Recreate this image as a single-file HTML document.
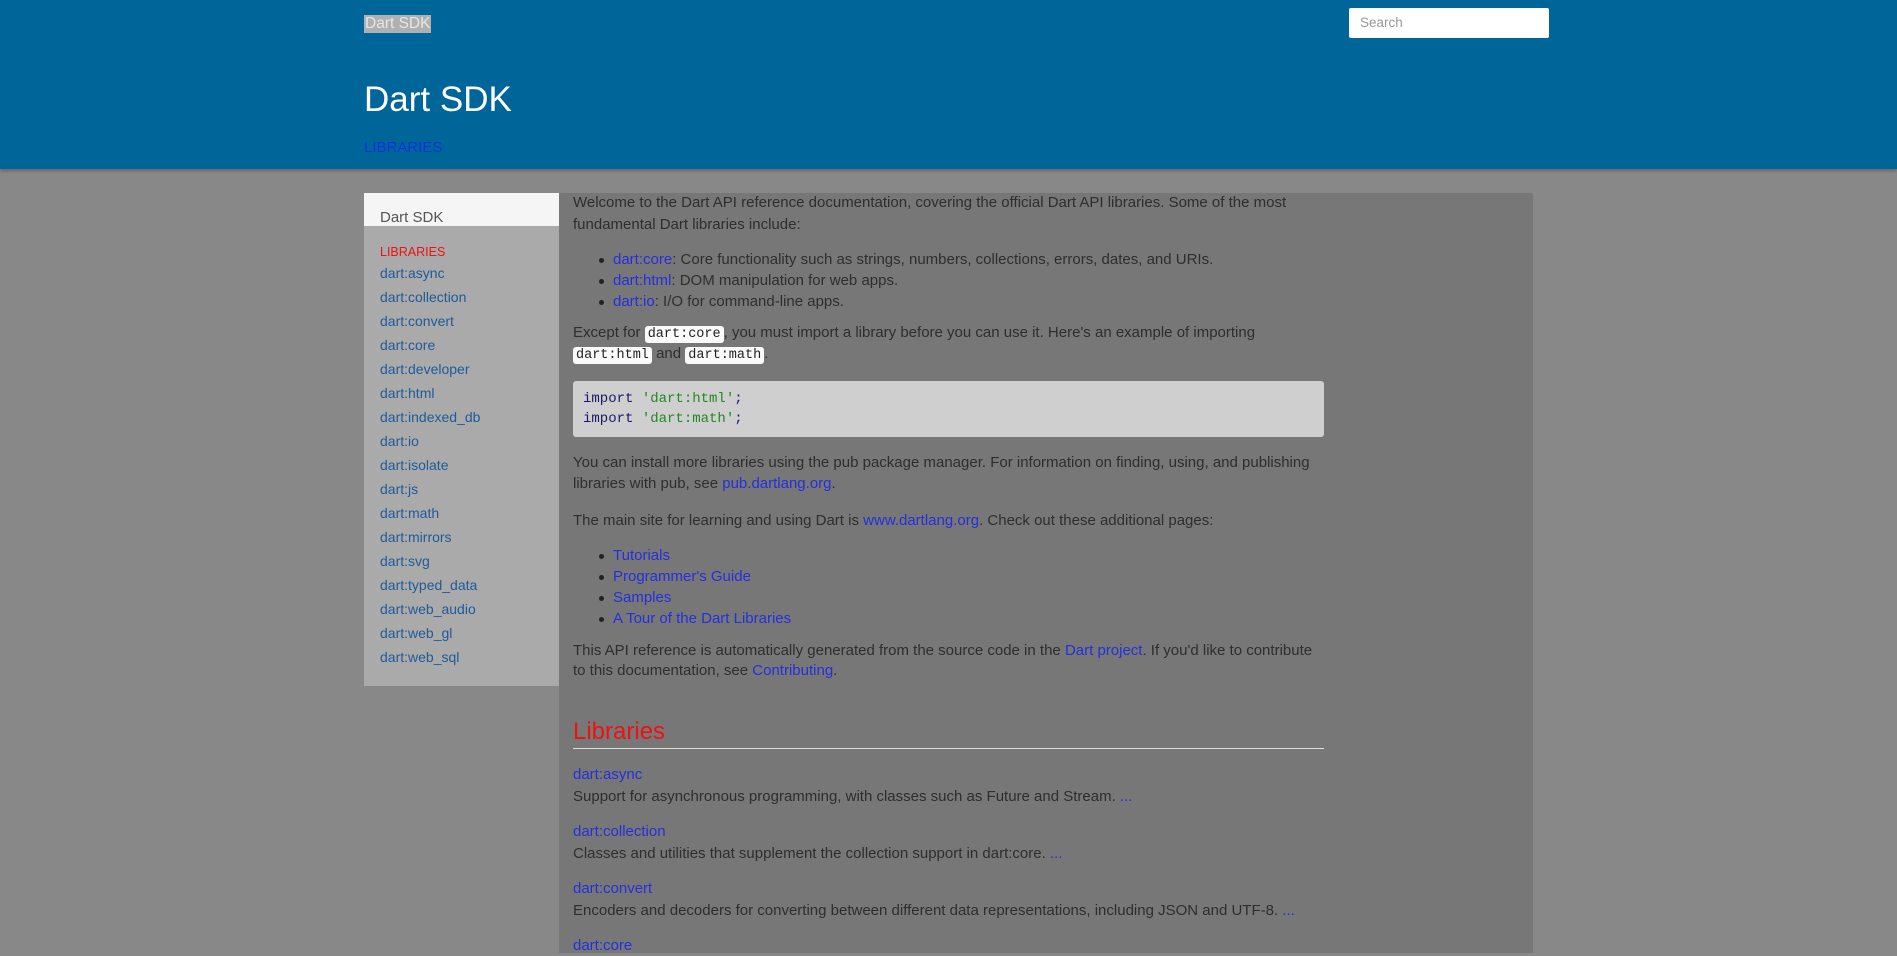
<!DOCTYPE html>
<html><head><meta charset="utf-8">
<style>
*{box-sizing:border-box;margin:0;padding:0}
body{width:1897px;height:953px;overflow:hidden;background:#888;font-family:"Liberation Sans",sans-serif;color:#2e2e2e;position:relative}
a{color:#2230dd;text-decoration:none}
.hdr{position:absolute;left:0;top:0;width:1897px;height:169px;background:#006699;box-shadow:0 2px 3px rgba(0,0,0,.25)}
.abs{position:absolute;white-space:nowrap}
.sb{position:absolute;left:364px;top:193px;width:195px;height:493px;background:#aaa}
.sbh{position:absolute;left:364px;top:193px;width:195px;height:33px;background:#f5f5f5}
.main{position:absolute;left:559px;top:193px;width:974px;height:760px;background:#777}
.t{position:absolute;left:573px;font-size:15px;white-space:nowrap;line-height:20px}
.b{position:absolute;left:613px;font-size:15px;white-space:nowrap;line-height:20px}
.b:before{content:"";position:absolute;left:-14px;top:8px;width:5px;height:5px;border-radius:50%;background:#222}
code{font-family:"Liberation Mono",monospace;font-size:13.5px;background:#fafafa;color:#222;border-radius:3px;padding:1px 3px}
.si{position:absolute;left:380px;font-size:14px;color:#1f5a99;white-space:nowrap}
</style></head><body>
<div class="hdr"></div>
<div class="abs" style="left:364px;top:15px;font-size:15.5px;line-height:18px;background:#b0b0b0;color:#e6e6e6;padding:0 1px">Dart SDK</div>
<div class="abs" style="left:1349px;top:8px;width:200px;height:30px;background:#fff;border-radius:2px;font-size:13.5px;color:#999;padding:7px 11px">Search</div>
<div class="abs" style="left:364px;top:78px;font-size:35px;color:#fff;line-height:44px">Dart SDK</div>
<div class="abs" style="left:364px;top:139px;font-size:15px;color:#0a33dd">LIBRARIES</div>

<div class="main"></div>
<div class="sb"></div>
<div class="sbh"></div>
<div class="abs" style="left:380px;top:209px;font-size:15px;color:#555">Dart SDK</div>
<div class="abs" style="left:380px;top:245px;font-size:12.5px;color:#ee1111">LIBRARIES</div>
<div class="si" style="top:265px">dart:async</div>
<div class="si" style="top:289px">dart:collection</div>
<div class="si" style="top:313px">dart:convert</div>
<div class="si" style="top:337px">dart:core</div>
<div class="si" style="top:361px">dart:developer</div>
<div class="si" style="top:385px">dart:html</div>
<div class="si" style="top:409px">dart:indexed_db</div>
<div class="si" style="top:433px">dart:io</div>
<div class="si" style="top:457px">dart:isolate</div>
<div class="si" style="top:481px">dart:js</div>
<div class="si" style="top:505px">dart:math</div>
<div class="si" style="top:529px">dart:mirrors</div>
<div class="si" style="top:553px">dart:svg</div>
<div class="si" style="top:577px">dart:typed_data</div>
<div class="si" style="top:601px">dart:web_audio</div>
<div class="si" style="top:625px">dart:web_gl</div>
<div class="si" style="top:649px">dart:web_sql</div>

<div class="t" style="top:193px">Welcome to the Dart API reference documentation, covering the official Dart API libraries. Some of the most</div>
<div class="t" style="top:215px">fundamental Dart libraries include:</div>
<div class="b" style="top:250px"><a>dart:core</a>: Core functionality such as strings, numbers, collections, errors, dates, and URIs.</div>
<div class="b" style="top:271px"><a>dart:html</a>: DOM manipulation for web apps.</div>
<div class="b" style="top:292px"><a>dart:io</a>: I/O for command-line apps.</div>
<div class="t" style="top:323px">Except for <code>dart:core</code>, you must import a library before you can use it. Here's an example of importing</div>
<div class="t" style="top:344px"><code>dart:html</code> and <code>dart:math</code>.</div>
<div class="abs" style="left:573px;top:381px;width:751px;height:56px;background:#cfcfcf;border-radius:3px;font-family:'Liberation Mono',monospace;font-size:14px;line-height:20px;padding:8px 10px;color:#1a1a66">import <span style="color:#228822">'dart:html'</span>;<br>import <span style="color:#228822">'dart:math'</span>;</div>
<div class="t" style="top:453px">You can install more libraries using the pub package manager. For information on finding, using, and publishing</div>
<div class="t" style="top:474px">libraries with pub, see <a>pub.dartlang.org</a>.</div>
<div class="t" style="top:511px">The main site for learning and using Dart is <a>www.dartlang.org</a>. Check out these additional pages:</div>
<div class="b" style="top:546px"><a>Tutorials</a></div>
<div class="b" style="top:567px"><a>Programmer's Guide</a></div>
<div class="b" style="top:588px"><a>Samples</a></div>
<div class="b" style="top:609px"><a>A Tour of the Dart Libraries</a></div>
<div class="t" style="top:641px">This API reference is automatically generated from the source code in the <a>Dart project</a>. If you'd like to contribute</div>
<div class="t" style="top:661px">to this documentation, see <a>Contributing</a>.</div>
<div class="abs" style="left:573px;top:718px;font-size:24px;color:#ee1111">Libraries</div>
<div class="abs" style="left:573px;top:748px;width:751px;height:1px;background:#ddd"></div>
<div class="t" style="top:765px"><a>dart:async</a></div>
<div class="t" style="top:787px">Support for asynchronous programming, with classes such as Future and Stream. <a>...</a></div>
<div class="t" style="top:822px"><a>dart:collection</a></div>
<div class="t" style="top:844px">Classes and utilities that supplement the collection support in dart:core. <a>...</a></div>
<div class="t" style="top:879px"><a>dart:convert</a></div>
<div class="t" style="top:901px">Encoders and decoders for converting between different data representations, including JSON and UTF-8. <a>...</a></div>
<div class="t" style="top:936px"><a>dart:core</a></div>
</body></html>
